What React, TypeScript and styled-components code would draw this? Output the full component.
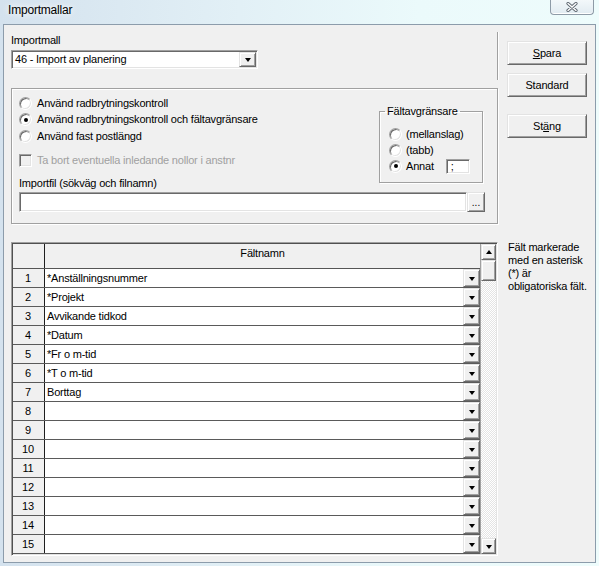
import React from 'react';
import styled, { createGlobalStyle, css } from 'styled-components';

const GlobalStyle = createGlobalStyle`
  * { box-sizing: border-box; }
  html, body { margin: 0; padding: 0; }
  body {
    font-family: "Liberation Sans", Arial, sans-serif;
    font-size: 11px;
    letter-spacing: -0.2px;
    color: #000;
  }
`;

const sunken = css`
  border: 1px solid;
  border-color: #a0a0a0 #ffffff #ffffff #a0a0a0;
  box-shadow: inset 1px 1px 0 #696969, inset -1px -1px 0 #e3e3e3;
`;

const raised = css`
  border: 1px solid;
  border-color: #e3e3e3 #696969 #696969 #e3e3e3;
  box-shadow: inset 1px 1px 0 #ffffff, inset -1px -1px 0 #a0a0a0;
  background: #f0f0f0;
`;

const fields = [
  '*Anställningsnummer',
  '*Projekt',
  'Avvikande tidkod',
  '*Datum',
  '*Fr o m-tid',
  '*T o m-tid',
  'Borttag',
  '', '', '', '', '', '', '', '',
];

const App = () => {
  return (
    <Window>
      <GlobalStyle />
      <TitleBar>
        <Title>Importmallar</Title>
        <CloseButton>
          <svg width="12" height="10" viewBox="0 0 12 10">
            <path d="M2 1.5 L10 8.5 M10 1.5 L2 8.5" stroke="#5d6670" strokeWidth="3.2" strokeLinecap="round" />
            <path d="M2 1.5 L10 8.5 M10 1.5 L2 8.5" stroke="#ffffff" strokeWidth="1.4" strokeLinecap="round" />
          </svg>
        </CloseButton>
      </TitleBar>
      <Client>
        <LeftColumn>
          <TopSection>
            <Label>Importmall</Label>
            <Combo>
              <ComboText>46 - Import av planering</ComboText>
              <ComboButton>
                <ArrowDown />
              </ComboButton>
            </Combo>
          </TopSection>

          <Panel>
            <PanelTop>
              <Options>
                <RadioRow>
                  <Radio />
                  <span>Använd radbrytningskontroll</span>
                </RadioRow>
                <RadioRow>
                  <Radio $checked />
                  <span>Använd radbrytningskontroll och fältavgränsare</span>
                </RadioRow>
                <RadioRow>
                  <Radio />
                  <span>Använd fast postlängd</span>
                </RadioRow>
                <CheckRow>
                  <CheckBox />
                  <DisabledText>Ta bort eventuella inledande nollor i anstnr</DisabledText>
                </CheckRow>
                <FieldLabel>Importfil (sökväg och filnamn)</FieldLabel>
              </Options>
              <Delimiters>
                <Legend>Fältavgränsare</Legend>
                <DelimiterList>
                  <SmallRadioRow>
                    <Radio />
                    <span>(mellanslag)</span>
                  </SmallRadioRow>
                  <SmallRadioRow>
                    <Radio />
                    <span>(tabb)</span>
                  </SmallRadioRow>
                  <SmallRadioRow>
                    <Radio $checked />
                    <span>Annat</span>
                    <OtherInput>;</OtherInput>
                  </SmallRadioRow>
                </DelimiterList>
              </Delimiters>
            </PanelTop>
            <FileRow>
              <FileInput />
              <BrowseButton>...</BrowseButton>
            </FileRow>
          </Panel>

          <GridFrame>
            <Table>
              <HeaderRow>
                <RowNumHeader />
                <NameHeader>Fältnamn</NameHeader>
              </HeaderRow>
              {fields.map((name, i) => (
                <Row key={i}>
                  <RowNum>{i + 1}</RowNum>
                  <NameCell>
                    <NameText>{name}</NameText>
                    <DropButton>
                      <ArrowDown />
                    </DropButton>
                  </NameCell>
                </Row>
              ))}
            </Table>
            <ScrollBar>
              <ScrollButton>
                <ArrowUp />
              </ScrollButton>
              <Thumb />
              <Track />
              <ScrollButton>
                <ArrowDown />
              </ScrollButton>
            </ScrollBar>
          </GridFrame>
        </LeftColumn>

        <RightColumn>
          <DialogButton $gap={9}>
            <u>S</u>para
          </DialogButton>
          <DialogButton $gap={8}>Standard</DialogButton>
          <DialogButton $gap={17}>
            St<u>ä</u>ng
          </DialogButton>
          <Note>
            Fält markerade
            <br />
            med en asterisk
            <br />
            (*) är
            <br />
            obligatoriska fält.
          </Note>
        </RightColumn>
      </Client>
    </Window>
  );
};

export default App;

const Window = styled.div`
  width: 599px;
  height: 566px;
  display: flex;
  flex-direction: column;
  background: linear-gradient(to right, #d4e2ee, #e2f0f6 40%, #ebfafb 70%, #eefcfc);
  overflow: hidden;
`;

const TitleBar = styled.div`
  height: 24px;
  flex: none;
  display: flex;
  justify-content: space-between;
  align-items: flex-start;
  padding-left: 8px;
`;

const Title = styled.div`
  font-size: 12px;
  line-height: 15px;
  padding-top: 3px;
  color: #000;
  text-shadow: 0 0 6px #ffffff, 0 0 10px #ffffff;
`;

const CloseButton = styled.div`
  width: 44px;
  height: 15px;
  margin-right: 5px;
  border: 1px solid #8e9ba7;
  border-top: none;
  border-radius: 0 0 4px 4px;
  background: linear-gradient(#f3f8fa, #e1ebf1);
  box-shadow: inset 0 -1px 0 #ffffff;
  display: flex;
  align-items: center;
  justify-content: center;
`;

const Client = styled.div`
  flex: 1;
  margin: 0 3px 3px 3px;
  border: 1px solid #8c9cab;
  background: #f0f0f0;
  display: flex;
  gap: 9px;
  padding: 7px 0 0 7px;
`;

const LeftColumn = styled.div`
  width: 487px;
  display: flex;
  flex-direction: column;
`;

const TopSection = styled.div`
  height: 48px;
  padding-top: 2px;
  border-right: 1px solid #a0a0a0;
  box-shadow: 1px 0 0 #ffffff;
`;

const Label = styled.div`
  line-height: 13px;
`;

const Combo = styled.div`
  ${sunken};
  margin-top: 3px;
  width: 247px;
  height: 19px;
  background: #ffffff;
  display: flex;
  align-items: center;
`;

const ComboText = styled.div`
  flex: 1;
  padding-left: 3px;
  line-height: 13px;
`;

const ComboButton = styled.div`
  ${raised};
  width: 17px;
  height: 15px;
  margin-right: 1px;
  display: flex;
  align-items: center;
  justify-content: center;
`;

const ArrowDown = styled.span`
  width: 0;
  height: 0;
  border-left: 3.5px solid transparent;
  border-right: 3.5px solid transparent;
  border-top: 4px solid #000;
  margin-top: 1px;
`;

const ArrowUp = styled.span`
  width: 0;
  height: 0;
  border-left: 3.5px solid transparent;
  border-right: 3.5px solid transparent;
  border-bottom: 4px solid #000;
`;

const Panel = styled.div`
  margin-top: 8px;
  border: 1px solid #a0a0a0;
  box-shadow: inset 1px 1px 0 #ffffff, 1px 1px 0 #ffffff;
  padding: 6px 12px 11px 7px;
  display: flex;
  flex-direction: column;
`;

const PanelTop = styled.div`
  display: flex;
  justify-content: space-between;
  align-items: flex-start;
`;

const Options = styled.div`
  display: flex;
  flex-direction: column;
`;

const RadioRow = styled.div`
  height: 16.5px;
  display: flex;
  align-items: center;
  gap: 5px;
  line-height: 13px;
`;

const Radio = styled.span<{ $checked?: boolean }>`
  flex: none;
  width: 13px;
  height: 13px;
  border-radius: 50%;
  background: #ffffff;
  border: 1px solid;
  border-color: #a0a0a0 #ffffff #ffffff #a0a0a0;
  box-shadow: inset 1px 1px 0 #696969, inset -1px -1px 0 #e3e3e3;
  display: flex;
  align-items: center;
  justify-content: center;
  &::after {
    content: '';
    width: 4px;
    height: 4px;
    border-radius: 50%;
    background: ${(p) => (p.$checked ? '#000' : 'transparent')};
  }
`;

const CheckRow = styled.div`
  margin-top: 7.5px;
  height: 16px;
  display: flex;
  align-items: center;
  gap: 5px;
  line-height: 13px;
`;

const CheckBox = styled.span`
  ${sunken};
  flex: none;
  width: 13px;
  height: 13px;
  background: #f0f0f0;
`;

const DisabledText = styled.span`
  color: #a0a0a0;
`;

const FieldLabel = styled.div`
  margin-top: 9px;
  line-height: 13px;
`;

const Delimiters = styled.fieldset`
  margin: 9.5px 2px 0 0;
  width: 104px;
  padding: 8.5px 0 8px 5px;
  border: 1px solid #a0a0a0;
  box-shadow: inset 1px 1px 0 #ffffff, 1px 1px 0 #ffffff;
  min-width: 0;
`;

const Legend = styled.legend`
  padding: 0 2px;
  line-height: 13px;
`;

const DelimiterList = styled.div`
  padding-left: 4px;
  display: flex;
  flex-direction: column;
`;

const SmallRadioRow = styled.div`
  height: 16px;
  display: flex;
  align-items: center;
  gap: 4px;
  line-height: 13px;
`;

const OtherInput = styled.span`
  ${sunken};
  margin-left: 8px;
  width: 24px;
  height: 15px;
  background: #ffffff;
  padding-left: 4px;
  line-height: 12px;
`;

const FileRow = styled.div`
  margin-top: 2px;
  height: 20px;
  display: flex;
`;

const FileInput = styled.div`
  ${sunken};
  flex: 1;
  background: #ffffff;
`;

const BrowseButton = styled.div`
  ${raised};
  width: 18px;
  text-align: center;
  line-height: 20px;
  font-size: 10px;
  letter-spacing: 0;
`;

const GridFrame = styled.div`
  margin-top: 18px;
  height: 314px;
  border: 1px solid;
  border-color: #a0a0a0 #ffffff #ffffff #a0a0a0;
  box-shadow: inset 1px 1px 0 #505050, inset -1px -1px 0 #e3e3e3;
  padding: 1px;
  display: flex;
`;

const Table = styled.div`
  flex: 1;
  display: flex;
  flex-direction: column;
`;

const HeaderRow = styled.div`
  height: 25px;
  flex: none;
  display: flex;
  border-bottom: 1px solid #555555;
  background: #f0f0f0;
`;

const RowNumHeader = styled.div`
  width: 32px;
  border-right: 1px solid #1e1e1e;
`;

const NameHeader = styled.div`
  flex: 1;
  text-align: center;
  padding-top: 3px;
  line-height: 13px;
`;

const Row = styled.div`
  height: 19px;
  flex: none;
  display: flex;
  border-bottom: 1px solid #5a5a5a;
`;

const RowNum = styled.div`
  width: 32px;
  border-right: 1px solid #1e1e1e;
  background: #f0f0f0;
  text-align: center;
  line-height: 18px;
  padding-right: 1px;
`;

const NameCell = styled.div`
  flex: 1;
  display: flex;
  background: #ffffff;
`;

const NameText = styled.div`
  flex: 1;
  padding-left: 2px;
  line-height: 18px;
`;

const DropButton = styled.div`
  ${raised};
  width: 17px;
  display: flex;
  align-items: center;
  justify-content: center;
`;

const ScrollBar = styled.div`
  width: 16px;
  display: flex;
  flex-direction: column;
  border-left: 1px solid #a0a0a0;
`;

const ScrollButton = styled.div`
  ${raised};
  height: 16px;
  flex: none;
  display: flex;
  align-items: center;
  justify-content: center;
`;

const Thumb = styled.div`
  ${raised};
  height: 21px;
  flex: none;
`;

const Track = styled.div`
  flex: 1;
  background: repeating-conic-gradient(#e4e4e4 0 25%, #ffffff 0 50%) 0 0 / 2px 2px;
`;

const RightColumn = styled.div`
  width: 80px;
  display: flex;
  flex-direction: column;
`;

const DialogButton = styled.div<{ $gap: number }>`
  ${raised};
  margin-top: ${(p) => p.$gap}px;
  height: 24px;
  display: flex;
  align-items: center;
  justify-content: center;
  line-height: 13px;
`;

const Note = styled.div`
  margin-top: 102.5px;
  padding-left: 1px;
  line-height: 13px;
`;
